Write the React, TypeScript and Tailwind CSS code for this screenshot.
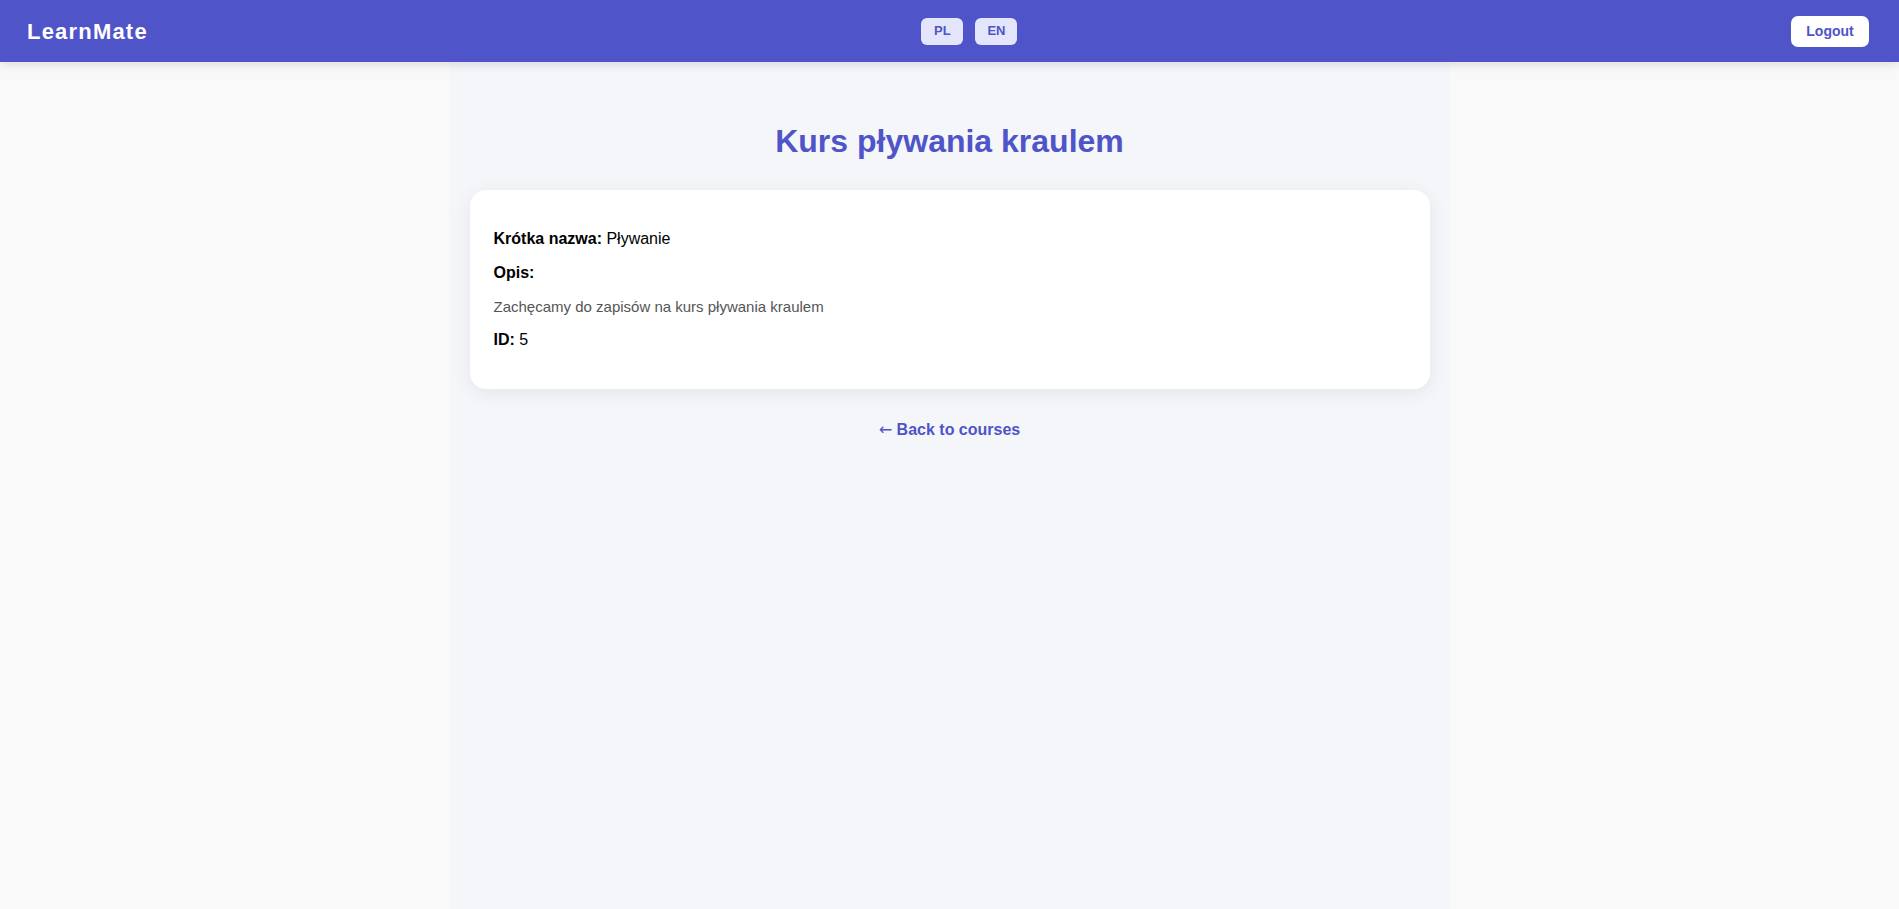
import React from 'react';

const ACCENT = 'text-[#4f54c8]';

const Header: React.FC = () => (
  <header className="relative z-10 flex h-[62px] items-center justify-between bg-[#4f54c8] pl-[27px] pr-[30px] shadow-[0_2px_10px_rgba(0,0,0,0.12)]">
    <div className="text-[22px] font-bold tracking-[1.2px] text-white">LearnMate</div>
    <div className="flex gap-[12px]">
      {['PL', 'EN'].map((lang) => (
        <button
          key={lang}
          className={`h-[27px] w-[42px] rounded-[6px] bg-[#e3e5fa] text-[13px] font-bold ${ACCENT}`}
        >
          {lang}
        </button>
      ))}
    </div>
    <button className={`h-[31px] w-[78px] rounded-[7px] bg-white text-[14px] font-bold ${ACCENT}`}>
      Logout
    </button>
  </header>
);

export default function App() {
  return (
    <div className="min-h-[909px] bg-[#f9f9f9] font-['Liberation_Sans',Arial,sans-serif]">
      <Header />
      <main className="mx-auto min-h-[847px] w-[1000px] bg-[#f5f6fa] px-5 pt-[61px]">
        <h1 className={`text-center text-[32px] font-bold leading-[37px] ${ACCENT}`}>
          Kurs pływania kraulem
        </h1>
        <div className="mt-[30px] rounded-[16px] bg-white px-6 py-[40px] shadow-[0_4px_20px_rgba(0,0,0,0.07)]">
          <p className="text-[16px] leading-[18px] text-black">
            <strong>Krótka nazwa:</strong> Pływanie
          </p>
          <p className="mt-4 text-[16px] leading-[18px] text-black">
            <strong>Opis:</strong>
          </p>
          <p className="mt-4 mb-4 text-[15px] leading-[17px] text-[#555]">
            Zachęcamy do zapisów na kurs pływania kraulem
          </p>
          <p className="text-[16px] leading-[18px] text-black">
            <strong>ID:</strong> 5
          </p>
        </div>
        <div className="mt-[32px] text-center leading-[18px]">
          <a href="#" className={`text-[16px] font-bold leading-[18px] ${ACCENT}`}>
            <span className="font-['DejaVu_Sans',sans-serif] font-normal leading-[18px]">←</span> Back to courses
          </a>
        </div>
      </main>
    </div>
  );
}
